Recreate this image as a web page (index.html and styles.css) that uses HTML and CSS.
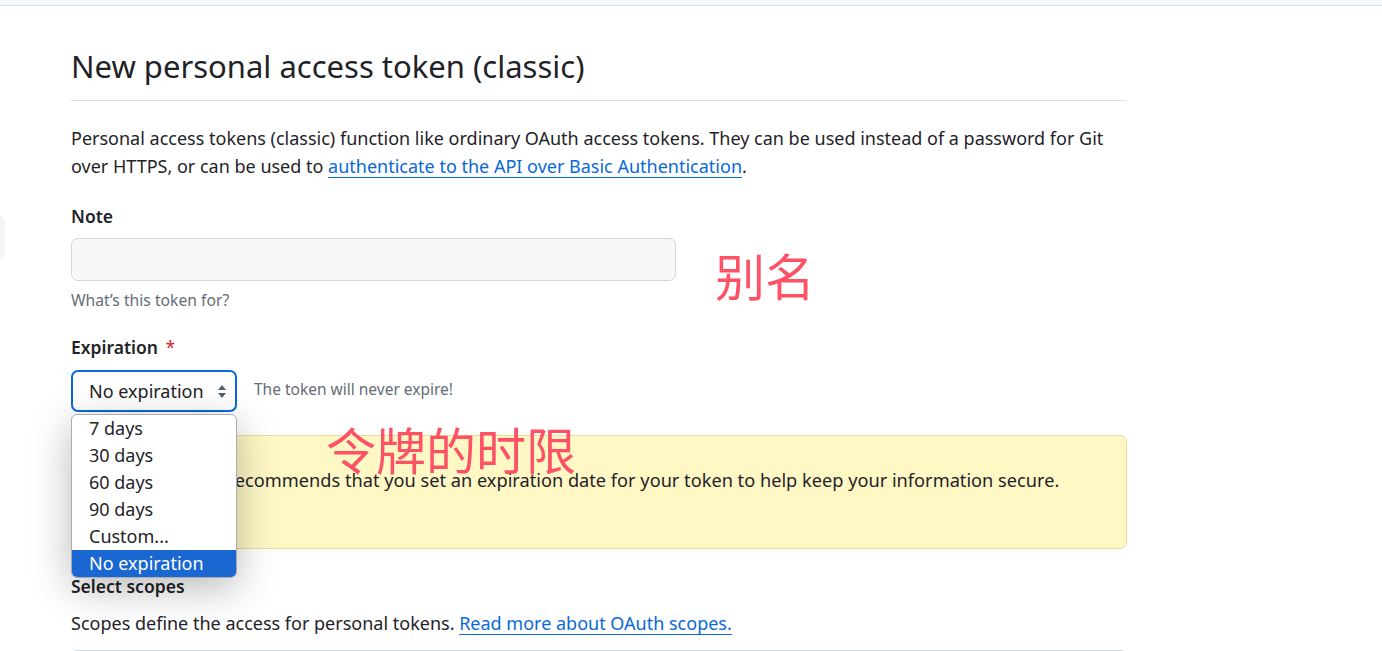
FILE: index.html
```html
<!DOCTYPE html>
<html lang="en">
<head>
<meta charset="utf-8">
<title>New personal access token (classic)</title>
<link rel="stylesheet" href="styles.css">
</head>
<body>
<div class="topbar"></div>
<div class="edge-tab"></div>
<main class="container">
  <h2 class="subhead">New personal access token (classic)</h2>
  <p class="intro">Personal access tokens (classic) function like ordinary OAuth access tokens. They can be used instead of a password for Git over HTTPS, or can be used to <a href="#" class="link">authenticate to the API over Basic Authentication</a>.</p>

  <div class="field note-field">
    <label class="label">Note</label>
    <div class="note-row">
      <input class="input" type="text">
      <span class="annot annot-note">别名</span>
    </div>
    <p class="hint">What’s this token for?</p>
  </div>

  <div class="field exp-field">
    <label class="label">Expiration <span class="req">*</span></label>
    <div class="exp-row">
      <div class="select-wrap">
        <div class="select">
          <span>No expiration</span>
          <svg class="select-arrow" width="8" height="13" viewBox="0 0 8 13"><path d="M4 0 L8 5 L0 5 Z M0 8 L8 8 L4 13 Z" fill="#57606a"/></svg>
        </div>
        <ul class="menu">
          <li class="opt">7 days</li>
          <li class="opt">30 days</li>
          <li class="opt">60 days</li>
          <li class="opt">90 days</li>
          <li class="opt">Custom...</li>
          <li class="opt selected">No expiration</li>
        </ul>
      </div>
      <span class="exp-note">The token will never expire!</span>
    </div>
  </div>

  <div class="flash">
    <span class="annot annot-flash">令牌的时限</span>
    <p class="flash-text">GitHub strongly recommends that you set an expiration date for your token to help keep your information secure.</p>
  </div>

  <h3 class="section-title">Select scopes</h3>
  <p class="scopes-text">Scopes define the access for personal tokens. <a href="#" class="link">Read more about OAuth scopes.</a></p>
  <div class="scopes-box"></div>
</main>
</body>
</html>
```

FILE: styles.css
```css
* { box-sizing: border-box; }

html, body {
  margin: 0;
  padding: 0;
  background: #ffffff;
  overflow: hidden;
}

body {
  font-family: "Noto Sans", "Open Sans", "Liberation Sans", "Noto Sans CJK SC", sans-serif;
  color: #1f2328;
  font-size: 18px;
}

.topbar {
  height: 6px;
  background: #f6f8fa;
  border-bottom: 1px solid #d8dee4;
}

.edge-tab {
  position: absolute;
  left: 0;
  top: 216px;
  width: 5px;
  height: 42px;
  background: #f3f5f7;
  border-radius: 0 5px 5px 0;
}

.container {
  width: 1056px;
  margin-left: 71px;
}

.subhead {
  margin: 40px 0 0;
  padding-bottom: 14px;
  font-size: 31px;
  font-weight: 400;
  line-height: 40px;
  border-bottom: 1px solid #d8dee4;
}

.intro {
  margin: 23px 0 0;
  line-height: 28px;
}

.link {
  color: #0969da;
  text-decoration: underline;
  text-underline-offset: 4px;
  text-decoration-thickness: 1px;
}

.field { display: flex; flex-direction: column; }

.note-field { margin-top: 24px; }

.label {
  font-weight: 600;
  line-height: 24px;
  font-size: 17.5px;
}

.req { color: #cf222e; font-weight: 400; margin-left: 3px; }

.note-row {
  display: flex;
  align-items: flex-start;
  height: 43px;
  margin-top: 10px;
}

.input {
  width: 605px;
  height: 43px;
  background: #f6f8fa;
  border: 1px solid #d0d7de;
  border-radius: 7px;
  font: inherit;
}

.annot {
  font-family: "Noto Sans CJK SC", sans-serif;
  color: #fd5266;
  font-size: 50px;
  line-height: 56px;
  font-weight: 400;
  white-space: nowrap;
}

.annot-note { margin-left: 39px; margin-top: 8px; }

.hint {
  margin: 9px 0 0;
  font-size: 15.7px;
  line-height: 20px;
  color: #656d76;
}

.exp-field { margin-top: 25px; }

.exp-row {
  display: flex;
  align-items: center;
  margin-top: 11px;
}

.select-wrap { position: relative; }

.select {
  width: 166px;
  height: 42px;
  border: 2px solid #0969da;
  border-radius: 7px;
  display: flex;
  align-items: center;
  justify-content: space-between;
  padding: 0 9px 0 16px;
  font-size: 18px;
}

.select-arrow { display: block; }

.exp-note {
  margin-left: 17px;
  margin-top: -4px;
  font-size: 15.5px;
  color: #656d76;
}

.menu {
  position: absolute;
  z-index: 5;
  left: 0;
  top: calc(100% + 2px);
  width: 166px;
  margin: 0;
  padding: 0;
  list-style: none;
  background: #ffffff;
  border: 1px solid #a8adb3;
  border-radius: 6px;
  overflow: hidden;
  box-shadow: 0 10px 40px rgba(0, 0, 0, 0.28);
}

.opt {
  height: 27px;
  line-height: 27px;
  padding-left: 17px;
  font-size: 18px;
  color: #1f2328;
}

.opt.selected {
  background: #1a67d2;
  color: #ffffff;
}

.flash {
  position: relative;
  margin-top: 23px;
  height: 114px;
  background: #fff8c5;
  border: 1px solid #eedc92;
  border-radius: 7px;
  padding: 30px 16px 0 16px;
}

.annot-flash {
  position: absolute;
  left: 254px;
  top: -16px;
}

.flash-text {
  margin: 0;
  font-size: 18.2px;
  line-height: 28px;
}

.section-title {
  margin: 25px 0 0;
  font-size: 17.5px;
  font-weight: 600;
  line-height: 24px;
}

.scopes-text {
  margin: 11px 0 0;
  line-height: 28px;
}

.scopes-box {
  margin-top: 13px;
  height: 40px;
  border: 1px solid #d0d7de;
  border-radius: 6px;
}
```
